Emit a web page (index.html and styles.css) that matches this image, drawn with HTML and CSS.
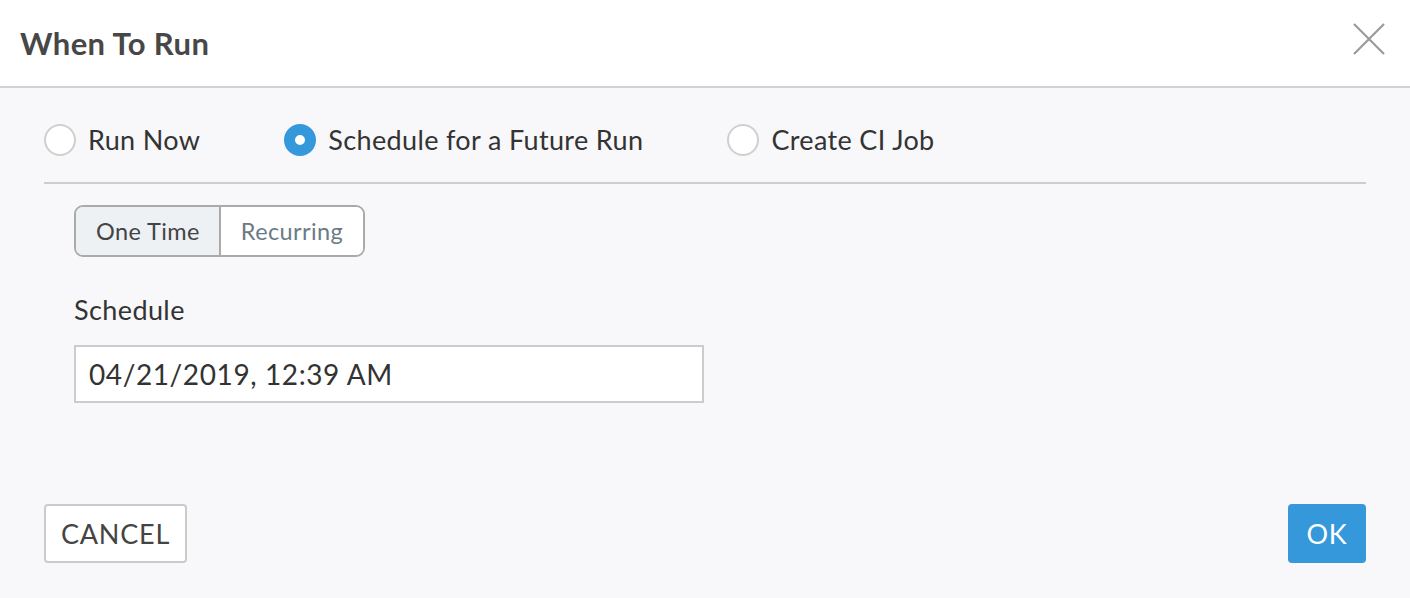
FILE: index.html
```html
<!DOCTYPE html>
<html lang="en">
<head>
  <meta charset="UTF-8" />
  <meta name="viewport" content="width=device-width, initial-scale=1.0">
  <title>When To Run</title>
  <link rel="stylesheet" href="styles.css">
</head>
<body>
  <div class="modal">
    <div class="modal-header">
      <h2>When To Run</h2>
      <button class="close" type="button" aria-label="Close">
        <svg width="34" height="34" viewBox="0 0 34 34"><path d="M2 2 L32 32 M32 2 L2 32" stroke="#9a9a9a" stroke-width="2.2" fill="none"/></svg>
      </button>
    </div>
    <div class="modal-body">
      <div class="run-options">
        <label class="radio"><span class="dot"></span>Run Now</label>
        <label class="radio checked"><span class="dot"></span>Schedule for a Future Run</label>
        <label class="radio"><span class="dot"></span>Create CI Job</label>
      </div>
      <div class="schedule">
        <div class="toggle">
          <button type="button" class="active">One Time</button>
          <button type="button">Recurring</button>
        </div>
        <div class="field-label">Schedule</div>
        <input class="date-input" type="text" value="04/21/2019, 12:39 AM">
      </div>
      <div class="footer">
        <button type="button" class="btn-cancel">CANCEL</button>
        <button type="button" class="btn-ok">OK</button>
      </div>
    </div>
  </div>
</body>
</html>
```

FILE: styles.css
```css
body { margin: 0; font-family: Lato, "Open Sans", sans-serif; background: #f8f8fa; color: #333; }
.modal { width: 1410px; height: 598px; display: flex; flex-direction: column; }
.modal-header { height: 86px; background: #fff; border-bottom: 2px solid #d2d2d2; display: flex; align-items: center; justify-content: space-between; padding: 0 24px 0 20px; }
.modal-header h2 { margin: 0; font-size: 31px; font-weight: 700; letter-spacing: 0.4px; color: #474747; }
.close { background: none; border: none; padding: 0; width: 34px; height: 34px; margin-top: -8px; cursor: pointer; }
.modal-body { flex: 1; padding: 0 44px; display: flex; flex-direction: column; }
.run-options { display: flex; align-items: center; gap: 84px; padding: 36px 0 26px; border-bottom: 2px solid #cdcdcd; }
.radio { display: flex; align-items: center; gap: 12px; font-size: 27px; letter-spacing: 0.35px; color: #333; line-height: 32px; }
.dot { width: 28px; height: 28px; border: 2px solid #cfcfcf; border-radius: 50%; background: #fff; box-sizing: content-box; }
.radio.checked .dot { width: 10px; height: 10px; border: 11px solid #3498db; }
.schedule { padding-left: 30px; display: flex; flex-direction: column; align-items: flex-start; }
.toggle { margin-top: 21px; display: flex; height: 52px; border: 2px solid #aaa; border-radius: 9px; overflow: hidden; box-sizing: border-box; }
.toggle button { font-family: inherit; font-size: 23.5px; letter-spacing: 0.4px; border: none; background: #fff; color: #6b7b86; padding: 0 20px; }
.toggle button.active { background: #edf1f4; color: #444; border-right: 2px solid #aaa; padding: 0 19px 0 20px; }
.field-label { margin-top: 38px; font-size: 27px; letter-spacing: 0.4px; line-height: 30px; color: #333; }
.date-input { margin-top: 20px; width: 630px; height: 58px; box-sizing: border-box; border: 2px solid #ccc; padding: 0 13px; font-family: inherit; font-size: 28px; letter-spacing: 0.6px; color: #333; background: #fff; }
.footer { margin-top: 101px; display: flex; justify-content: space-between; }
.footer button { font-family: inherit; font-size: 27px; letter-spacing: 0.8px; height: 59px; border-radius: 4px; cursor: pointer; }
.btn-cancel { background: #fff; border: 2px solid #cbcbcb; color: #444; padding: 0; width: 143px; }
.btn-ok { background: #3498db; border: none; color: #fff; width: 78px; }
```
